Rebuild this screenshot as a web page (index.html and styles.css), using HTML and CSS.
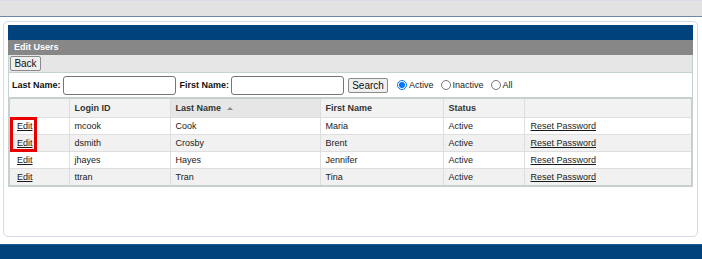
FILE: index.html
```html
<!DOCTYPE html>
<html>
<head>
<meta charset="utf-8">
<link rel="stylesheet" href="styles.css">
</head>
<body>
<div class="topbar"></div>
<div class="card">
  <div class="bluebar"></div>
  <div class="title">Edit Users</div>
  <div class="toolbar"><button class="btn back">Back</button></div>
  <div class="search">
    <label class="lbl">Last Name:</label>
    <input class="txt" type="text">
    <label class="lbl first">First Name:</label>
    <input class="txt" type="text">
    <button class="btn srch">Search</button>
    <span class="radio r1"><input type="radio" name="s" checked><span>Active</span></span>
    <span class="radio"><input type="radio" name="s"><span>Inactive</span></span>
    <span class="radio"><input type="radio" name="s"><span>All</span></span>
  </div>
  <div class="gridwrap">
    <table class="grid">
      <colgroup>
        <col class="c1"><col class="c2"><col class="c3"><col class="c4"><col class="c5"><col class="c6">
      </colgroup>
      <thead>
        <tr><th></th><th>Login ID</th><th class="sorted">Last Name <span class="arrow"></span></th><th>First Name</th><th>Status</th><th></th></tr>
      </thead>
      <tbody>
        <tr><td><a href="#">Edit</a></td><td>mcook</td><td>Cook</td><td>Maria</td><td>Active</td><td><a href="#">Reset Password</a></td></tr>
        <tr class="alt"><td><a href="#">Edit</a></td><td>dsmith</td><td>Crosby</td><td>Brent</td><td>Active</td><td><a href="#">Reset Password</a></td></tr>
        <tr><td><a href="#">Edit</a></td><td>jhayes</td><td>Hayes</td><td>Jennifer</td><td>Active</td><td><a href="#">Reset Password</a></td></tr>
        <tr class="alt"><td><a href="#">Edit</a></td><td>ttran</td><td>Tran</td><td>Tina</td><td>Active</td><td><a href="#">Reset Password</a></td></tr>
      </tbody>
    </table>
    <div class="highlight"></div>
  </div>
</div>
<div class="footer"></div>
</body>
</html>
```
FILE: styles.css
```css
html, body {
  margin: 0;
  padding: 0;
  background: #ffffff;
  font-family: "Liberation Sans", Arial, sans-serif;
  font-size: 9px;
  color: #1a1a1a;
}
.topbar {
  height: 17px;
  background: #e2e2e2;
  border-top: 1px solid #dcdce8;
  border-bottom: 1px solid #7088a8;
  box-sizing: border-box;
}
.card {
  margin: 4px 4px 0 3px;
  border: 1px solid #d8d8e6;
  border-radius: 5px;
  padding: 3px 4px 0 4px;
  height: 216px;
  box-sizing: border-box;
}
.bluebar {
  height: 15px;
  background: #00427c;
}
.title {
  height: 15px;
  line-height: 15px;
  background: #878787;
  color: #fff;
  font-weight: bold;
  padding-left: 6px;
}
.toolbar {
  height: 18px;
  background: #e6e6e6;
  border: 1px solid #c4d2d0;
  border-top: none;
  box-sizing: border-box;
  display: flex;
  align-items: center;
  padding-left: 1px;
}
.btn {
  font-family: "Liberation Sans", Arial, sans-serif;
  font-size: 10px;
  color: #111;
  background: #efefef;
  border: 1px solid #8a8a8a;
  border-radius: 2px;
  padding: 0;
  height: 15px;
  line-height: 13px;
}
.back { width: 31px; }
.search {
  height: 24px;
  border-left: 1px solid #c4d2d0;
  border-right: 1px solid #c4d2d0;
  box-sizing: border-box;
  display: flex;
  align-items: center;
  padding-left: 3px;
}
.lbl {
  font-weight: bold;
  color: #111;
}
.lbl.first { margin-left: 4px; }
.txt {
  width: 113px;
  height: 19px;
  box-sizing: border-box;
  border: 1px solid #767676;
  border-radius: 3px;
  margin: 0 0 0 2px;
  padding: 0;
}
.srch {
  width: 40px;
  margin-left: 4px;
}
.radio {
  display: flex;
  align-items: center;
  margin-left: 7px;
  color: #1a1a1a;
}
.radio.r1 { margin-left: 9px; }
.radio input {
  width: 10px;
  height: 10px;
  margin: 0 2px 0 0;
}
.gridwrap {
  position: relative;
}
.grid {
  width: 100%;
  border-collapse: collapse;
  border: 2px solid #c6d0d0;
  table-layout: fixed;
}
.c1 { width: 60px; }
.c2 { width: 101px; }
.c3 { width: 150px; }
.c4 { width: 123px; }
.c5 { width: 81px; }
.grid th, .grid td {
  border: 1px solid #dedede;
  text-align: left;
  padding: 0 0 0 5px;
  white-space: nowrap;
}
.grid th {
  height: 18px;
  background: #f2f2f2;
  font-weight: bold;
  color: #333;
}
.grid th.sorted { background: #e6e6e6; }
.arrow {
  display: inline-block;
  width: 0;
  height: 0;
  border-left: 3px solid transparent;
  border-right: 3px solid transparent;
  border-bottom: 3px solid #888;
  margin-left: 3px;
  vertical-align: 1px;
}
.grid td {
  height: 16px;
  background: #fff;
  color: #1a1a1a;
}
.grid tr.alt td { background: #f1f1f1; }
.grid td:first-child { padding-left: 7px; }
.grid td:last-child { padding-left: 6px; }
.grid a { color: #1a1a1a; text-decoration: underline; }
.highlight {
  position: absolute;
  left: 2px;
  top: 20px;
  width: 27px;
  height: 35px;
  border: 3px solid #e80000;
  box-sizing: border-box;
}
.footer {
  margin-top: 7px;
  height: 16px;
  background: #00427c;
  border-top: 1px solid #1a5a90;
}
```
